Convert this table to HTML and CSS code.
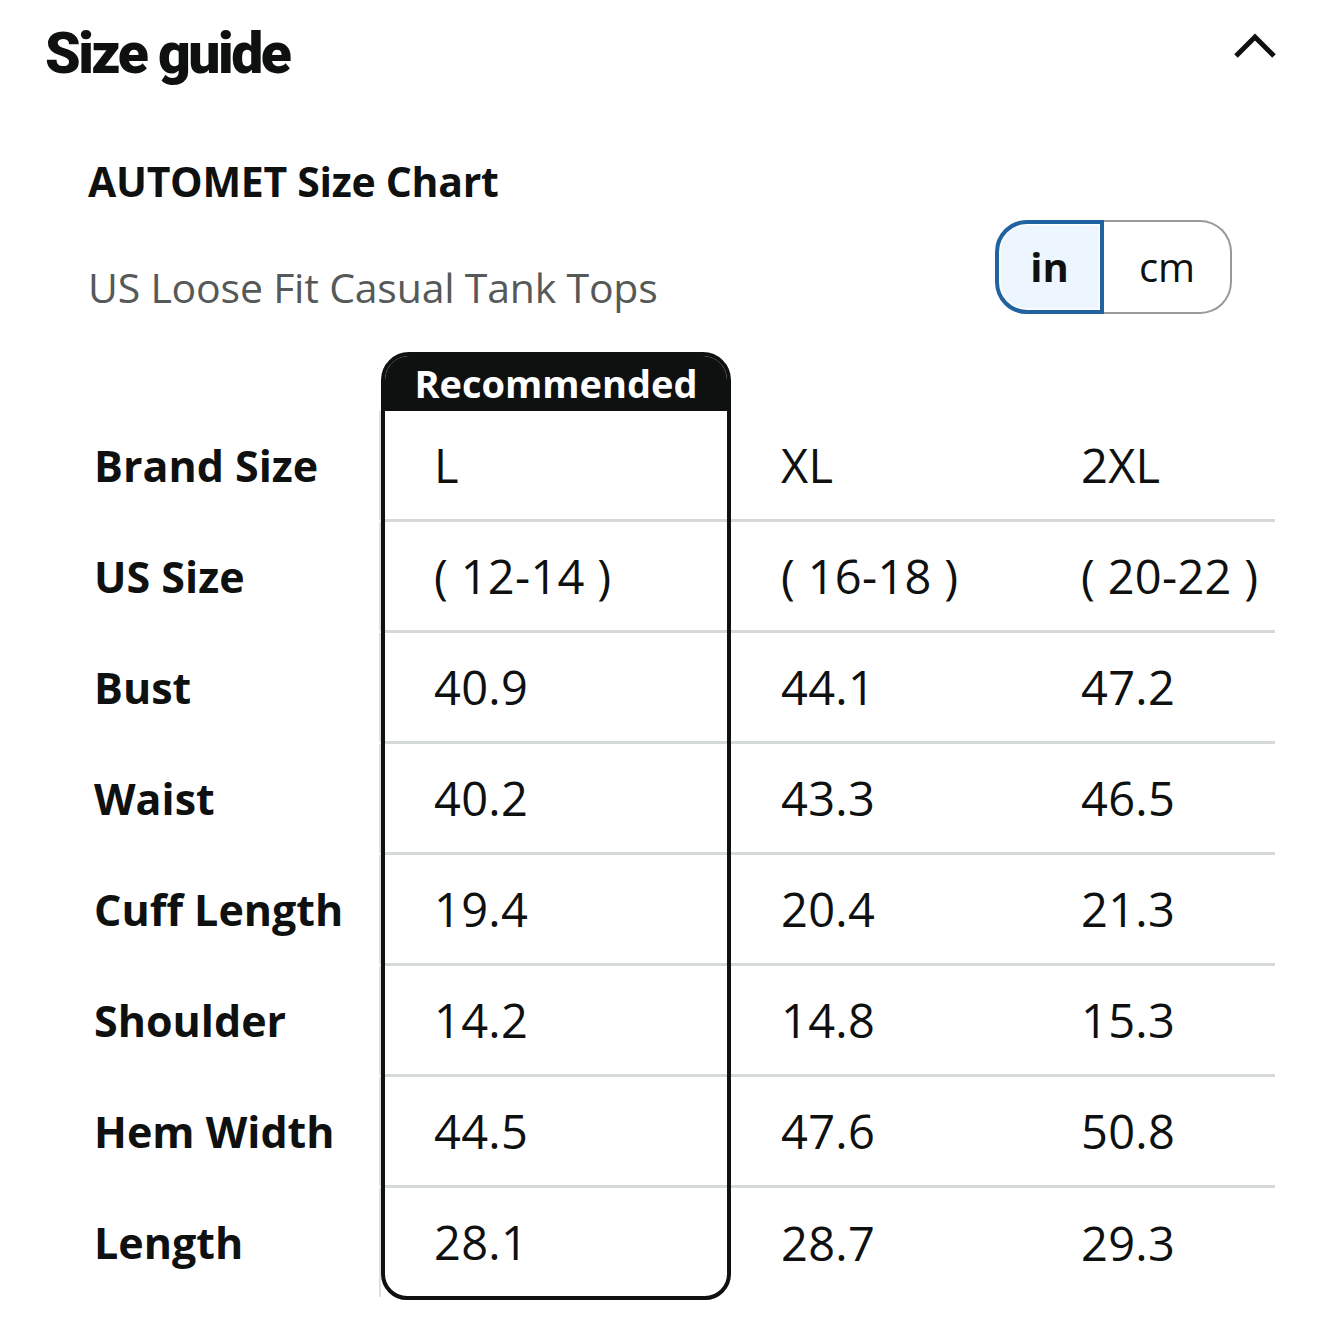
FILE: index.html
```html
<!DOCTYPE html>
<html lang="en">
<head>
<meta charset="utf-8">
<title>Size guide</title>
<link rel="stylesheet" href="styles.css">
</head>
<body>
<main class="page">
  <header class="guide-head">
    <h1 class="guide-title">Size guide</h1>
    <svg class="chevron" width="44" height="30" viewBox="0 0 44 30" aria-hidden="true">
      <polyline points="3,25 22,6 41,25" fill="none" stroke="#0f1111" stroke-width="5" stroke-linecap="butt" stroke-linejoin="miter"/>
    </svg>
  </header>

  <section class="chart">
    <h2 class="chart-title">AUTOMET Size Chart</h2>
    <div class="chart-sub">
      <p class="chart-desc">US Loose Fit Casual Tank Tops</p>
      <div class="unit-toggle">
        <span class="unit unit-active">in</span>
        <span class="unit">cm</span>
      </div>
    </div>

    <div class="table">
      <div class="col col-labels">
        <div class="col-head"></div>
        <div class="cell label">Brand Size</div>
        <div class="cell label">US Size</div>
        <div class="cell label">Bust</div>
        <div class="cell label">Waist</div>
        <div class="cell label">Cuff Length</div>
        <div class="cell label">Shoulder</div>
        <div class="cell label">Hem Width</div>
        <div class="cell label">Length</div>
      </div>
      <div class="col col-rec">
        <div class="rec-head">Recommended</div>
        <div class="cell value">L</div>
        <div class="cell value">( 12-14 )</div>
        <div class="cell value">40.9</div>
        <div class="cell value">40.2</div>
        <div class="cell value">19.4</div>
        <div class="cell value">14.2</div>
        <div class="cell value">44.5</div>
        <div class="cell value">28.1</div>
      </div>
      <div class="col col-xl">
        <div class="col-head"></div>
        <div class="cell value">XL</div>
        <div class="cell value">( 16-18 )</div>
        <div class="cell value">44.1</div>
        <div class="cell value">43.3</div>
        <div class="cell value">20.4</div>
        <div class="cell value">14.8</div>
        <div class="cell value">47.6</div>
        <div class="cell value">28.7</div>
      </div>
      <div class="col col-2xl">
        <div class="col-head"></div>
        <div class="cell value">2XL</div>
        <div class="cell value">( 20-22 )</div>
        <div class="cell value">47.2</div>
        <div class="cell value">46.5</div>
        <div class="cell value">21.3</div>
        <div class="cell value">15.3</div>
        <div class="cell value">50.8</div>
        <div class="cell value">29.3</div>
      </div>
    </div>
  </section>
</main>
</body>
</html>
```

FILE: styles.css
```css
* { box-sizing: border-box; }

html, body {
  margin: 0;
  padding: 0;
  background: #ffffff;
}

body {
  font-family: "Open Sans", "Noto Sans", sans-serif;
  color: #0f1111;
}

.page {
  padding: 0 45px 0 45px;
  width: 1320px;
}

.guide-head {
  display: flex;
  justify-content: space-between;
  align-items: flex-start;
  padding-top: 25px;
  height: 130px;
}

.guide-title {
  margin: 0;
  font-family: Roboto, "Noto Sans", sans-serif;
  font-weight: 900;
  font-size: 57px;
  line-height: 1;
  letter-spacing: -2.5px;
}

.chevron {
  display: block;
  margin-top: 6px;
  margin-right: -2px;
}

.chart {
  padding-left: 43px;
}

.chart-title {
  margin: 31px 0 0 0;
  font-size: 41px;
  font-weight: 700;
  line-height: 1;
  letter-spacing: -0.3px;
}

.chart-sub {
  display: flex;
  justify-content: space-between;
  align-items: flex-start;
  margin-top: 18px;
  padding-right: 43px;
}

.chart-desc {
  margin: 47px 0 0 0;
  font-size: 41px;
  line-height: 1;
  color: #565959;
  letter-spacing: -0.2px;
}

.unit-toggle {
  display: flex;
  width: 237px;
  height: 94px;
}

.unit {
  display: flex;
  align-items: center;
  justify-content: center;
  font-size: 40px;
  line-height: 1;
  color: #0f1111;
}

.unit-active {
  width: 109px;
  font-weight: 700;
  background: #edf6ff;
  border: 4px solid #2162a1;
  border-radius: 32px 0 0 32px;
  box-shadow: inset 0 0 0 1.5px #ffffff;
}

.unit-active + .unit {
  flex: 1;
  border: 2px solid #979a9a;
  border-left: none;
  border-radius: 0 32px 32px 0;
}

.table {
  display: flex;
  margin-top: 38px;
  margin-left: 6px;
}

.col {
  display: flex;
  flex-direction: column;
}

.col-labels { width: 287px; }
.col-rec { width: 350px; }
.col-xl { width: 300px; }
.col-2xl { width: 244px; }

.col-head { height: 59px; }

.cell {
  height: 111px;
  display: flex;
  align-items: center;
  border-bottom: 3px solid #d5d9d9;
}

.cell:last-child { border-bottom: none; height: 109px; }

.label {
  font-weight: 700;
  font-size: 43px;
  border-bottom-color: transparent;
  border-right: 2px solid #dfe1e1;
}

.value {
  font-size: 47px;
  padding-left: 50px;
  white-space: nowrap;
  letter-spacing: 0.3px;
}

.col-rec {
  border: 4px solid #0f1111;
  border-radius: 28px 28px 26px 26px;
  overflow: hidden;
}

.col-rec .value { padding-left: 49px; }
.col-rec .cell:last-child { height: 108px; }

.rec-head {
  height: 55px;
  background: #0f1111;
  color: #ffffff;
  font-weight: 700;
  font-size: 38px;
  display: flex;
  align-items: center;
  justify-content: center;
  line-height: 1;
  padding-bottom: 2px;
}
```
